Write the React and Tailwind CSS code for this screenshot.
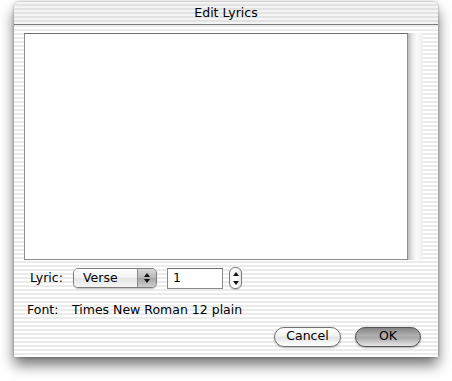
const font = { fontFamily: '"DejaVu Sans", "Liberation Sans", sans-serif' };

// Tiny up/down triangles used by the popup and the stepper
const Arrows = ({ gap = "gap-[2px]" }) => (
  <div className={`flex flex-col items-center ${gap}`}>
    <svg width="6" height="4" viewBox="0 0 6 4">
      <path d="M3 0L6 4H0z" fill="#111" />
    </svg>
    <svg width="6" height="4" viewBox="0 0 6 4">
      <path d="M0 0H6L3 4z" fill="#111" />
    </svg>
  </div>
);

const PopupButton = ({ label }) => (
  <div className="flex h-[20px] w-[84px] overflow-hidden rounded-[5px] border border-[#7d7d7d] shadow-[0_1px_1px_rgba(0,0,0,0.25)]">
    <div className="flex flex-1 items-center pl-[9px] text-[12.5px] text-black bg-[linear-gradient(#ffffff,#f1f1f1_50%,#e4e4e4_51%,#f6f6f6)]">
      {label}
    </div>
    <div className="flex w-[19px] items-center justify-center border-l border-[#8a8a8a] bg-[linear-gradient(#d8d8d8,#b7b7b7_50%,#a4a4a4_51%,#cfcfcf)]">
      <Arrows />
    </div>
  </div>
);

const Stepper = () => (
  <div className="flex h-[22px] w-[13px] items-center justify-center rounded-[6px] border border-[#7d7d7d] bg-[linear-gradient(90deg,#f4f4f4,#ffffff_50%,#e6e6e6)] shadow-[0_1px_1px_rgba(0,0,0,0.2)]">
    <Arrows gap="gap-[5px]" />
  </div>
);

const PushButton = ({ label, primary }) => (
  <div
    className={
      primary
        ? "flex h-[20px] w-[66px] items-center justify-center rounded-full border border-[#555555] text-[12.5px] text-black bg-[linear-gradient(#858585,#b3b3b3_45%,#a3a3a3_50%,#d2d2d2_85%,#e8e8e8)] shadow-[0_1px_2px_rgba(0,0,0,0.35)]"
        : "flex h-[20px] w-[67px] items-center justify-center rounded-full border border-[#707070] text-[12.5px] text-black bg-[linear-gradient(#ffffff,#f3f3f3_45%,#e2e2e2_50%,#f7f7f7_85%,#ffffff)] shadow-[0_1px_2px_rgba(0,0,0,0.3)]"
    }
  >
    {label}
  </div>
);

export default function App() {
  return (
    <div className="h-[381px] w-[452px] bg-white pt-[2px] pl-[14px]" style={font}>
      <div className="flex h-[355px] w-[424px] flex-col rounded-t-[5px] bg-[repeating-linear-gradient(0deg,#ffffff_0px,#ffffff_2px,#ebebeb_2px,#ebebeb_4px)] shadow-[0_8px_14px_rgba(0,0,0,0.55),0_0_3px_rgba(0,0,0,0.35)]">
        {/* Title bar */}
        <div className="flex h-[23px] items-center justify-center rounded-t-[5px] border-b border-[#7a7a7a] text-[12.5px] text-black bg-[repeating-linear-gradient(0deg,#f4f4f4_0px,#f4f4f4_2px,#e2e2e2_2px,#e2e2e2_4px)]">
          Edit Lyrics
        </div>

        <div className="flex flex-col pl-[10px] pt-[8px]">
          {/* Lyrics text area + empty scroll track */}
          <div className="flex">
            <div className="h-[227px] w-[384px] border border-[#8c8c8c] border-t-[#6f6f6f] bg-white" />
            <div className="h-[227px] w-[15px] bg-[linear-gradient(90deg,#bdbdbd,#e9e9e9_30%,#fafafa_55%,#f0f0f0)]" />
          </div>

          {/* Lyric row */}
          <div className="mt-[7px] flex h-[22px] items-center">
            <span className="ml-[6px] w-[43px] text-[12.5px] text-black">Lyric:</span>
            <PopupButton label="Verse" />
            <div className="ml-[10px] flex h-[21px] w-[56px] items-center border border-[#8a8a8a] border-t-[#6c6c6c] bg-white pl-[5px] text-[12.5px] text-black">
              1
            </div>
            <div className="ml-[6px]">
              <Stepper />
            </div>
          </div>

          {/* Font row */}
          <div className="mt-[12px] flex text-[12.5px] text-black">
            <span className="ml-[3px] w-[45px]">Font:</span>
            <span>Times New Roman 12 plain</span>
          </div>

          {/* Buttons */}
          <div className="mt-[7px] flex justify-end gap-[14px] pr-[17px]">
            <PushButton label="Cancel" />
            <PushButton label="OK" primary />
          </div>
        </div>
      </div>
    </div>
  );
}
